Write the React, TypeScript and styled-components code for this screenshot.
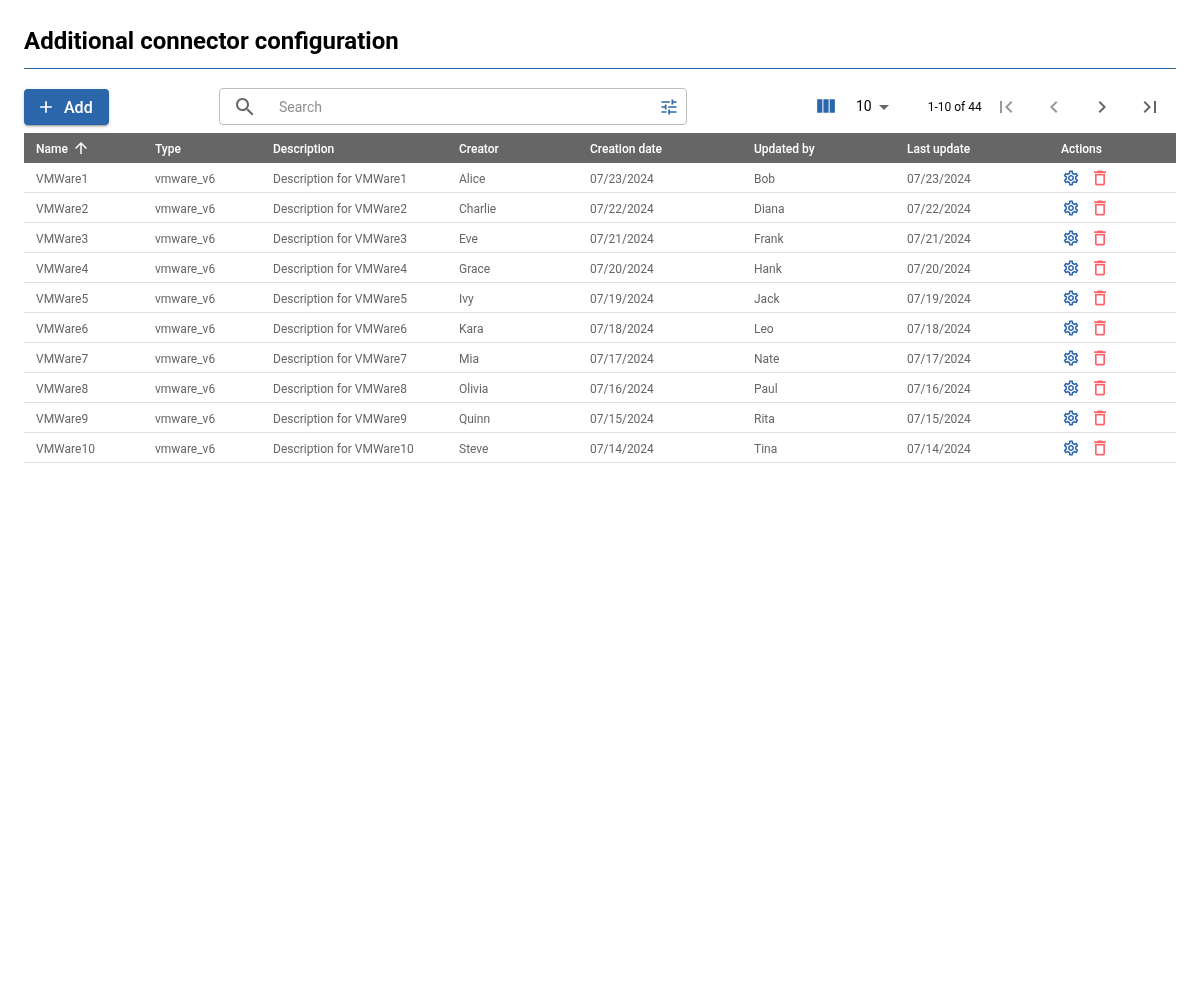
import React from "react";
import styled, { createGlobalStyle } from "styled-components";

const Global = createGlobalStyle`
  html, body { margin: 0; padding: 0; background: #fff; }
  body { font-family: Roboto, "Liberation Sans", sans-serif; }
`;

const GRID = "119px 118px 186px 131px 164px 153px 154px 127px";
const BLUE = "#2c66aa";

const Page = styled.div`
  padding: 24px 24px 0;
  width: 1152px;
  will-change: transform;
`;
const Title = styled.h1`
  margin: 0;
  height: 44px;
  border-bottom: 1px solid ${BLUE};
  font-size: 24px;
  line-height: 35px;
  font-weight: 700;
  color: #000;
`;
const Toolbar = styled.div`
  display: flex;
  align-items: center;
  height: 37px;
  margin-top: 19px;
  margin-bottom: 8px;
`;
const AddButton = styled.button`
  display: flex;
  align-items: center;
  width: 85px;
  height: 36px;
  padding: 0 0 0 12px;
  gap: 8px;
  border: none;
  border-radius: 4px;
  background: ${BLUE};
  color: #fff;
  font: 500 16px Roboto, sans-serif;
  box-shadow: 0 3px 1px -2px rgba(0,0,0,.2), 0 2px 2px 0 rgba(0,0,0,.14), 0 1px 5px 0 rgba(0,0,0,.12);
`;
const AddLabel = styled.span`
  padding-top: 2px;
`;
const Search = styled.div`
  display: flex;
  align-items: center;
  box-sizing: border-box;
  width: 468px;
  height: 37px;
  margin-left: 110px;
  padding: 0 7px 0 13px;
  border: 1px solid #bdbdbd;
  border-radius: 4px;
`;
const Placeholder = styled.span`
  flex: 1;
  margin-left: 22px;
  font-size: 14px;
  color: #8f8f8f;
`;
const Columns = styled.span`
  display: flex;
  margin-left: 126px;
`;
const PageSize = styled.div`
  display: flex;
  align-items: center;
  margin-left: 18px;
  font-size: 14px;
  color: #000;
`;
const PageSizeValue = styled.span`
  padding-bottom: 2px;
`;
const Range = styled.span`
  margin-left: 32px;
  font-size: 12px;
  color: #000;
  white-space: nowrap;
`;
const Pager = styled.div`
  display: flex;
  align-items: center;
  margin-left: 12px;
  gap: 24px;
`;
const Row = styled.div`
  display: grid;
  grid-template-columns: ${GRID};
  align-items: center;
  height: 30px;
  box-sizing: border-box;
  font-size: 12px;
`;
const HeadRow = styled(Row)`
  background: #666;
  color: #fff;
  font-weight: 500;
`;
const BodyRow = styled(Row)`
  border-bottom: 1px solid #e0e0e0;
  color: #666;
`;
const Cell = styled.div`
  display: flex;
  align-items: center;
  padding: 2px 0 0 12px;
  white-space: nowrap;
`;
const HeadName = styled(Cell)`
  padding-top: 0;
  line-height: 18px;
`;
const NameLabel = styled.span`
  padding-top: 2px;
`;
const ActionCell = styled(Cell)`
  padding: 0 0 0 13px;
  gap: 10px;
`;

const P = {
  search: "M15.5 14h-.79l-.28-.27C15.41 12.59 16 11.11 16 9.5 16 5.91 13.09 3 9.5 3S3 5.91 3 9.5 5.91 16 9.5 16c1.61 0 3.09-.59 4.23-1.57l.27.28v.79l5 4.99L20.49 19l-4.99-5zm-6 0C7.01 14 5 11.99 5 9.5S7.01 5 9.5 5 14 7.01 14 9.5 11.99 14 9.5 14z",
  tune: "M3 17v2h6v-2H3zM3 5v2h10V5H3zm10 16v-2h8v-2h-8v-2h-2v6h2zM7 9v2H3v2h4v2h2V9H7zm14 4v-2H11v2h10zm-6-4h2V7h4V5h-4V3h-2v6z",
  col: "M10 18h5V5h-5v13zm-6 0h5V5H4v13zM16 5v13h5V5h-5z",
  up: "M4 12l1.41 1.41L11 7.83V20h2V7.83l5.58 5.59L20 12l-8-8-8 8z",
  add: "M19 13h-6v6h-2v-6H5v-2h6V5h2v6h6v2z",
  first: "M18.41 16.59L13.82 12l4.59-4.59L17 6l-6 6 6 6zM6 6h2v12H6z",
  last: "M5.59 7.41L10.18 12l-4.59 4.59L7 18l6-6-6-6zM16 6h2v12h-2z",
  left: "M15.41 7.41L14 6l-6 6 6 6 1.41-1.41L10.83 12z",
  right: "M10 6L8.59 7.41 13.17 12l-4.58 4.59L10 18l6-6z",
  drop: "M7 10l5 5 5-5z",
  gear: "M19.43 12.98c.04-.32.07-.64.07-.98 0-.34-.03-.66-.07-.98l2.11-1.65c.19-.15.24-.42.12-.64l-2-3.46c-.09-.16-.26-.25-.44-.25-.06 0-.12.01-.17.03l-2.49 1c-.52-.4-1.08-.73-1.69-.98l-.38-2.65C14.46 2.18 14.25 2 14 2h-4c-.25 0-.46.18-.49.42l-.38 2.65c-.61.25-1.17.59-1.69.98l-2.49-1c-.06-.02-.12-.03-.18-.03-.17 0-.34.09-.43.25l-2 3.46c-.13.22-.07.49.12.64l2.11 1.65c-.04.32-.07.65-.07.98 0 .33.03.66.07.98l-2.11 1.65c-.19.15-.24.42-.12.64l2 3.46c.09.16.26.25.44.25.06 0 .12-.01.17-.03l2.49-1c.52.4 1.08.73 1.69.98l.38 2.65c.03.24.24.42.49.42h4c.25 0 .46-.18.49-.42l.38-2.65c.61-.25 1.17-.59 1.69-.98l2.49 1c.06.02.12.03.18.03.17 0 .34-.09.43-.25l2-3.46c.12-.22.07-.49-.12-.64l-2.11-1.65zm-1.98-1.71c.04.31.05.52.05.73 0 .21-.02.43-.05.73l-.14 1.13.89.7 1.08.84-.7 1.21-1.27-.51-1.04-.42-.9.68c-.43.32-.84.56-1.25.73l-1.06.43-.16 1.13-.2 1.35h-1.4l-.19-1.35-.16-1.13-1.06-.43c-.43-.18-.83-.41-1.23-.71l-.91-.7-1.06.43-1.27.51-.7-1.21 1.08-.84.89-.7-.14-1.13c-.03-.31-.05-.54-.05-.74s.02-.43.05-.73l.14-1.13-.89-.7-1.08-.84.7-1.21 1.27.51 1.04.42.9-.68c.43-.32.84-.56 1.25-.73l1.06-.43.16-1.13.2-1.35h1.39l.19 1.35.16 1.13 1.06.43c.43.18.83.41 1.23.71l.91.7 1.06-.43 1.27-.51.7 1.21-1.07.85-.89.7.14 1.13zM12 8c-2.21 0-4 1.79-4 4s1.79 4 4 4 4-1.79 4-4-1.79-4-4-4zm0 6c-1.1 0-2-.9-2-2s.9-2 2-2 2 .9 2 2-.9 2-2 2z",
  trash: "M6 19c0 1.1.9 2 2 2h8c1.1 0 2-.9 2-2V7H6v12zM8 9h8v10H8V9zm7.5-5l-1-1h-5l-1 1H5v2h14V4h-3.5z",
};

const IconSvg = styled.svg<{ $gap?: number }>`
  flex: none;
  display: block;
  margin-left: ${(p) => p.$gap ?? 0}px;
`;

const Icon = ({ d, size = 24, color = "#666", gap }: { d: string; size?: number; color?: string; gap?: number }) => (
  <IconSvg $gap={gap} width={size} height={size} viewBox="0 0 24 24" fill={color}>
    <path d={d} />
  </IconSvg>
);

const people = [
  ["Alice", "Bob"], ["Charlie", "Diana"], ["Eve", "Frank"], ["Grace", "Hank"], ["Ivy", "Jack"],
  ["Kara", "Leo"], ["Mia", "Nate"], ["Olivia", "Paul"], ["Quinn", "Rita"], ["Steve", "Tina"],
];

export default function App() {
  return (
    <Page>
      <Global />
      <Title>Additional connector configuration</Title>
      <Toolbar>
        <AddButton>
          <Icon d={P.add} size={20} color="#fff" />
          <AddLabel>Add</AddLabel>
        </AddButton>
        <Search>
          <Icon d={P.search} />
          <Placeholder>Search</Placeholder>
          <Icon d={P.tune} size={20} color={BLUE} />
        </Search>
        <Columns><Icon d={P.col} size={25} color={BLUE} /></Columns>
        <PageSize>
          <PageSizeValue>10</PageSizeValue>
          <Icon d={P.drop} />
        </PageSize>
        <Range>1-10 of 44</Range>
        <Pager>
          <Icon d={P.first} color="#999" />
          <Icon d={P.left} color="#999" />
          <Icon d={P.right} />
          <Icon d={P.last} />
        </Pager>
      </Toolbar>
      <HeadRow>
        <HeadName><NameLabel>Name</NameLabel><Icon d={P.up} size={18} color="#fff" gap={4} /></HeadName>
        <Cell>Type</Cell>
        <Cell>Description</Cell>
        <Cell>Creator</Cell>
        <Cell>Creation date</Cell>
        <Cell>Updated by</Cell>
        <Cell>Last update</Cell>
        <Cell>Actions</Cell>
      </HeadRow>
      {people.map(([creator, updater], i) => {
        const date = `07/${23 - i}/2024`;
        return (
          <BodyRow key={creator}>
            <Cell>VMWare{i + 1}</Cell>
            <Cell>vmware_v6</Cell>
            <Cell>Description for VMWare{i + 1}</Cell>
            <Cell>{creator}</Cell>
            <Cell>{date}</Cell>
            <Cell>{updater}</Cell>
            <Cell>{date}</Cell>
            <ActionCell>
              <Icon d={P.gear} size={18} color={BLUE} />
              <Icon d={P.trash} size={20} color="#ff6369" />
            </ActionCell>
          </BodyRow>
        );
      })}
    </Page>
  );
}
